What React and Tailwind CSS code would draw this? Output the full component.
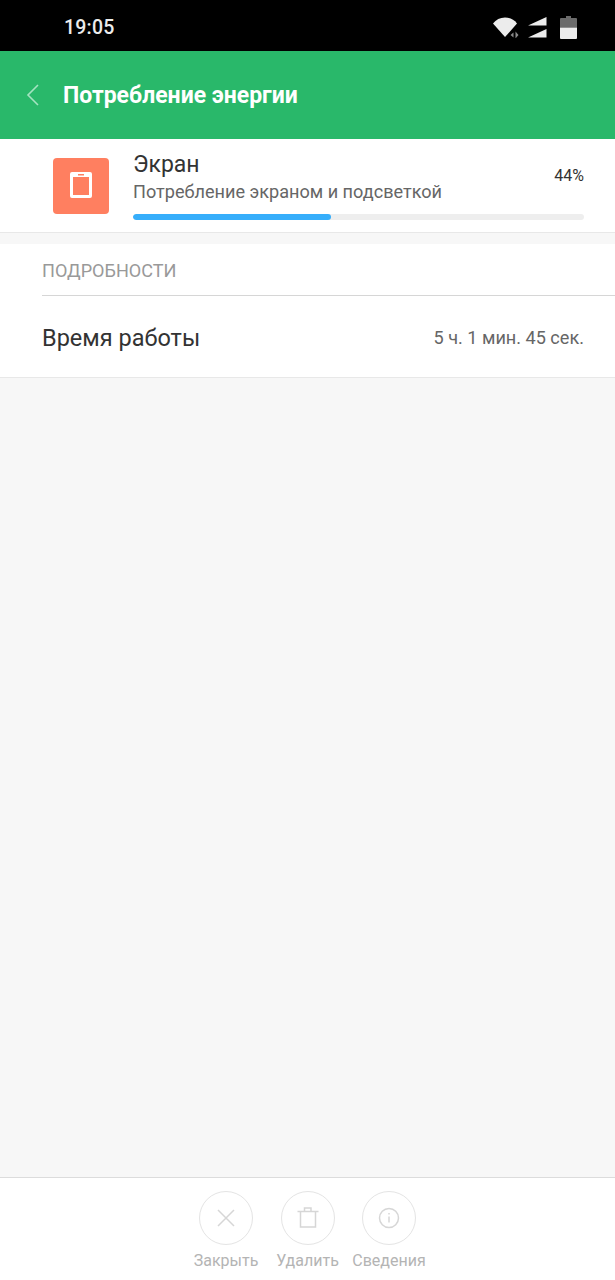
import React from 'react';

const actions = [
  {
    label: 'Закрыть',
    icon: <path d="M11 11l16 16M27 11L11 27" />,
  },
  {
    label: 'Удалить',
    icon: <path d="M8.5 12.5h21M11.5 12.5V28h15V12.5M15.5 12.5V9h6.5v3.5" />,
  },
  {
    label: 'Сведения',
    icon: (
      <>
        <circle cx="19" cy="19" r="9.5" />
        <path d="M19 17.5v6M19 14v1.6" />
      </>
    ),
  },
];

const StatusIcons = () => (
  <div className="flex items-center">
    <svg width="28" height="22" viewBox="0 0 28 22">
      <path d="M1 7.5C4 3.5 8 1.5 13 1.5s9 2 12 6L13 21z" fill="#ececec" />
      <path d="M21.5 16.5l-3 2.5 3 2.5zM23.5 15.5v7l3-3.5z" fill="#8a8a8a" />
    </svg>
    <svg width="19" height="22" viewBox="0 0 19 22" className="ml-[8px]">
      <path d="M0 9.5L18.5 1v8.5zM0 21.5L18.5 13v8.5z" fill="#ececec" />
    </svg>
    <svg width="17" height="23" viewBox="0 0 17 23" className="ml-[13px]">
      <path d="M6 0h5v2h5a1 1 0 011 1v8.5H0V3a1 1 0 011-1h5z" fill="#6b6b6b" />
      <path d="M0 11.5h17V22a1 1 0 01-1 1H1a1 1 0 01-1-1z" fill="#ececec" />
    </svg>
  </div>
);

export default function App() {
  return (
    <div className="w-[615px] h-[1280px] flex flex-col bg-[#f7f7f7] font-['Roboto',sans-serif] overflow-hidden">
      {/* Status bar */}
      <div className="h-[51px] bg-black flex items-center justify-between pl-[64px] pr-[38px] pt-[3px] shrink-0">
        <span className="mt-[2px] text-[#ececec] text-[19.5px] font-medium tracking-[0.2px]">19:05</span>
        <StatusIcons />
      </div>

      {/* Header */}
      <div className="h-[88px] bg-[#29b86a] flex items-center pl-[26px] shrink-0">
        <svg width="13" height="22" viewBox="0 0 13 22" fill="none" stroke="#a5e3c1" strokeWidth="1.6">
          <path d="M12 1L2 11l10 10" />
        </svg>
        <h1 className="ml-[24px] pt-[3px] text-white text-[23px] font-bold">Потребление энергии</h1>
      </div>

      {/* Usage row */}
      <div className="h-[94px] bg-white border-b border-[#e8e8e8] flex items-center pl-[53px] pr-[31px] shrink-0">
        <div className="w-[56px] h-[56px] pb-[2px] rounded-[4px] bg-[#ff7f60] flex items-center justify-center shrink-0">
          <svg width="22" height="26" viewBox="0 0 22 26">
            <path fillRule="evenodd" d="M2 0h18a2 2 0 012 2v22a2 2 0 01-2 2H2a2 2 0 01-2-2V2a2 2 0 012-2zM3 5v18h16V5zM8 2v1.5h6V2z" fill="#fff" />
          </svg>
        </div>
        <div className="ml-[24px] flex-1 flex flex-col">
          <div className="flex items-start justify-between">
            <div>
              <div className="text-[#333] text-[23px] leading-[26px]">Экран</div>
              <div className="text-[#666] text-[18.1px] leading-[24px] mt-[2px]">Потребление экраном и подсветкой</div>
            </div>
            <span className="text-[#333] text-[16px] mt-[12px]">44%</span>
          </div>
          <div className="h-[6px] mt-[10px] rounded-full bg-[#eeeeee] overflow-hidden">
            <div className="h-full w-[44%] rounded-full bg-[#36aefb]" />
          </div>
        </div>
      </div>

      {/* Details */}
      <div className="mt-[11px] bg-white border-b border-[#e8e8e8] shrink-0">
        <div className="ml-[42px] h-[52px] flex items-center border-b border-[#d6d6d6] pt-[2px]">
          <span className="text-[#999] text-[18.1px]">ПОДРОБНОСТИ</span>
        </div>
        <div className="h-[81px] pl-[42px] pr-[31px] pt-[2px] flex items-center justify-between">
          <span className="pt-[2px] text-[#333] text-[23.5px]">Время работы</span>
          <span className="text-[#666] text-[18.1px]">5 ч. 1 мин. 45 сек.</span>
        </div>
      </div>

      <div className="flex-1" />

      {/* Bottom actions */}
      <div className="h-[103px] bg-white border-t border-[#dcdcdc] flex justify-center gap-[27.5px] pt-[13px] shrink-0">
        {actions.map((a) => (
          <div key={a.label} className="w-[54px] flex flex-col items-center">
            <div className="w-[54px] h-[54px] shrink-0 rounded-full border border-[#e4e4e4] flex items-center justify-center">
              <svg width="38" height="38" viewBox="0 0 38 38" fill="none" stroke="#d6d6d6" strokeWidth="1.5">
                {a.icon}
              </svg>
            </div>
            <span className="mt-[4px] text-[#b4b4b4] text-[16px] whitespace-nowrap">{a.label}</span>
          </div>
        ))}
      </div>
    </div>
  );
}
